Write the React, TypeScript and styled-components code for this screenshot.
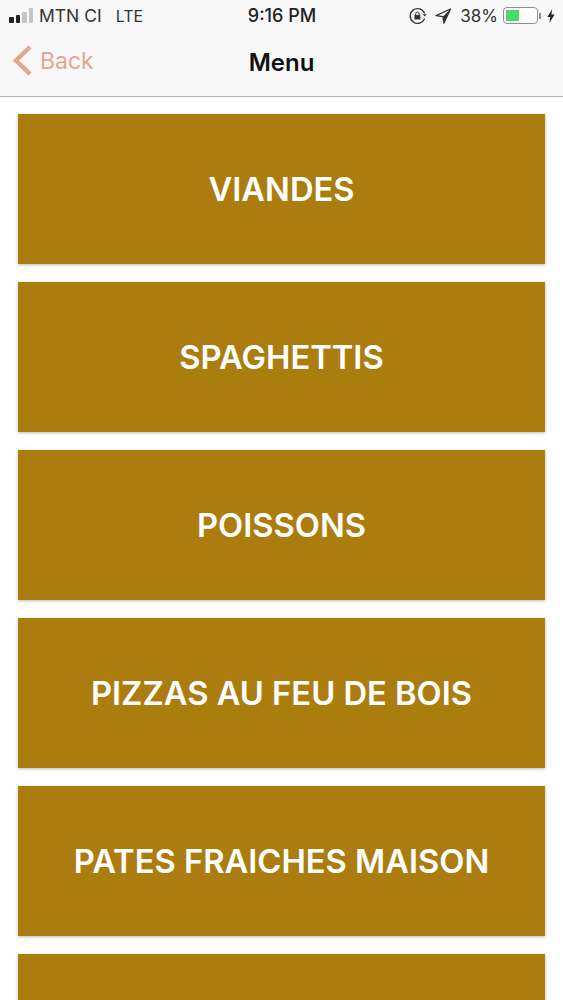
import React from "react";
import styled, { createGlobalStyle } from "styled-components";

const dishes = [
  "VIANDES",
  "SPAGHETTIS",
  "POISSONS",
  "PIZZAS AU FEU DE BOIS",
  "PATES FRAICHES MAISON",
  "",
];

export default function App() {
  return (
    <Screen>
      <GlobalStyle />
      <Header>
        <StatusBar>
          <StatusLeft>
            <Signal>
              {[6, 8, 11, 15].map((h, i) => (
                <SignalBar key={h} $height={h} $on={i < 2} />
              ))}
            </Signal>
            <Carrier>MTN CI</Carrier>
            <Network>LTE</Network>
          </StatusLeft>
          <Clock>9:16 PM</Clock>
          <StatusRight>
            <svg width="18" height="18" viewBox="0 0 18 18" fill="none">
              <path d="M15.6 6.6A7.4 7.4 0 1 0 15.6 11.4" stroke="#333" strokeWidth="1.3" />
              <path d="M13.6 7.2h4l-2 2.4z" fill="#333" />
              <rect x="5.4" y="8" width="6" height="4.6" rx=".6" fill="#333" />
              <path d="M6.7 8V6.7a1.7 1.7 0 0 1 3.4 0V8" stroke="#333" strokeWidth="1" />
            </svg>
            <LocationIcon width="16" height="16" viewBox="0 0 16 16">
              <path d="M15.5 1 1 7.6l7 1 .9 6.5z" fill="none" stroke="#333" strokeWidth="1.3" strokeLinejoin="round" />
              <path d="M15.5 1 8 8.6l.9 6.5z" fill="#333" />
            </LocationIcon>
            <Percent>38%</Percent>
            <Battery>
              <BatteryFill />
            </Battery>
            <BatteryTip />
            <svg width="8" height="14" viewBox="0 0 8 14">
              <path d="M5.2 0 .4 8h2.9L2.4 14 7.6 5.6H4.4z" fill="#222" />
            </svg>
          </StatusRight>
        </StatusBar>
        <NavBar>
          <BackLink>
            <svg width="21" height="33" viewBox="0 0 21 33" fill="none">
              <path d="M18 3 4 16.5 18 30" stroke="#e6a68e" strokeWidth="4.4" />
            </svg>
            <BackLabel>Back</BackLabel>
          </BackLink>
          <Title>Menu</Title>
        </NavBar>
      </Header>
      <MenuList>
        {dishes.map((dish, i) => (
          <MenuCard key={i}>{dish}</MenuCard>
        ))}
      </MenuList>
    </Screen>
  );
}

const GlobalStyle = createGlobalStyle`
  html, body {
    margin: 0;
    padding: 0;
    background: #fff;
  }
  body {
    font-family: "Inter", "Liberation Sans", sans-serif;
    overflow: hidden;
  }
`;

const Screen = styled.div`
  width: 563px;
  height: 1000px;
  overflow: hidden;
  background: #fff;
`;

const Header = styled.header`
  height: 97px;
  box-sizing: border-box;
  background: #f8f8f9;
  border-bottom: 1px solid #b4b4b7;
`;

const StatusBar = styled.div`
  height: 31px;
  display: grid;
  grid-template-columns: 1fr auto 1fr;
  align-items: center;
  padding: 0 8px 0 9px;
  color: #333;
  font-size: 17.5px;
`;

const StatusLeft = styled.div`
  display: flex;
  align-items: center;
`;

const Signal = styled.div`
  display: flex;
  align-items: flex-end;
  gap: 2px;
  margin-right: 6px;
`;

const SignalBar = styled.span<{ $height: number; $on: boolean }>`
  width: 4.5px;
  height: ${(p) => p.$height}px;
  border-radius: 1px;
  background: ${(p) => (p.$on ? "#222" : "#c4c4c6")};
`;

const Carrier = styled.span`
  margin-right: 14px;
`;

const Network = styled.span`
  font-size: 16px;
`;

const Clock = styled.span`
  font-size: 18px;
  font-weight: 500;
  color: #222;
`;

const StatusRight = styled.div`
  display: flex;
  align-items: center;
  justify-content: flex-end;
`;

const LocationIcon = styled.svg`
  margin-left: 8px;
`;

const Percent = styled.span`
  margin: 0 5px 0 9px;
  font-size: 17px;
`;

const Battery = styled.div`
  width: 35px;
  height: 17px;
  box-sizing: border-box;
  border: 1px solid #8d8d8d;
  border-radius: 4px;
  padding: 2px;
  background: #fff;
`;

const BatteryFill = styled.div`
  width: 13px;
  height: 100%;
  background: #4cd964;
`;

const BatteryTip = styled.span`
  width: 2px;
  height: 6px;
  margin: 0 6px 0 1px;
  background: #8d8d8d;
`;

const NavBar = styled.nav`
  position: relative;
  height: 63px;
  display: flex;
  align-items: center;
  justify-content: center;
`;

const BackLink = styled.div`
  position: absolute;
  left: 12px;
  top: 13px;
  display: flex;
  align-items: center;
  gap: 7px;
`;

const BackLabel = styled.span`
  font-size: 23px;
  color: #e6a68e;
`;

const Title = styled.h1`
  margin: 0;
  font-size: 24px;
  font-weight: 600;
  color: #111;
`;

const MenuList = styled.main`
  display: flex;
  flex-direction: column;
  gap: 18px;
  padding: 17px 18px 0;
`;

const MenuCard = styled.button`
  flex: none;
  height: 150px;
  border: 0;
  padding: 0;
  background: #ab7d0f;
  box-shadow: 0 1px 3px rgba(0, 0, 0, 0.28);
  color: #fff;
  font-family: inherit;
  font-size: 32.7px;
  font-weight: 600;
  text-align: center;
`;
